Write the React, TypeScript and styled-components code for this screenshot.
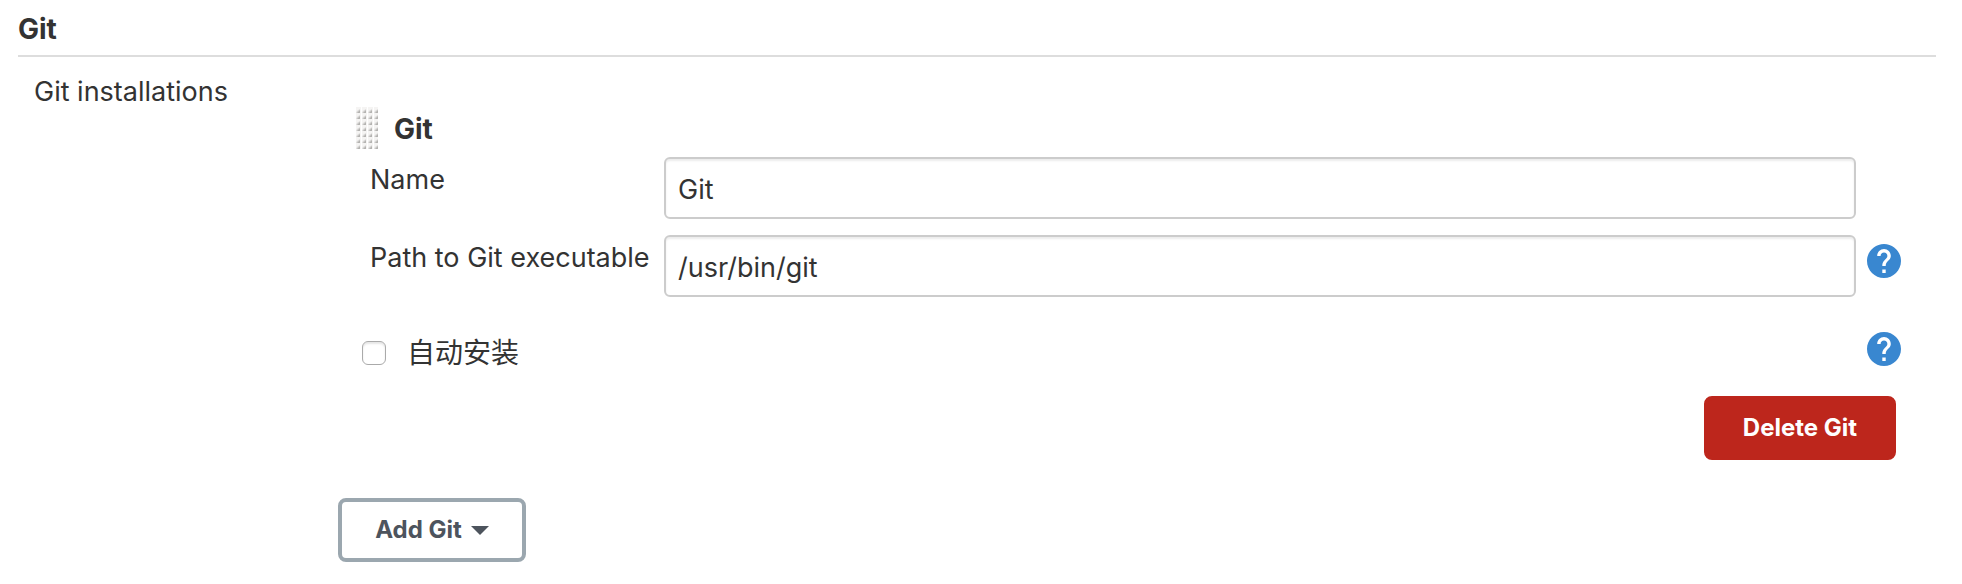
import React from "react";
import styled, { createGlobalStyle } from "styled-components";

const GlobalStyle = createGlobalStyle`
  *, *::before, *::after { box-sizing: border-box; }
  body {
    margin: 0;
    background: #fff;
    color: #333;
    font-family: Inter, "Noto Sans CJK SC", sans-serif;
    font-size: 27px;
    line-height: 36px;
  }
`;

const Page = styled.main`
  padding: 0 26px 20px 18px;
`;

const SectionTitle = styled.h2`
  margin: 0;
  padding: 11px 0 8px;
  border-bottom: 2px solid #ddd;
  font-size: 28px;
  font-weight: 700;
  line-height: 36px;
`;

const Setting = styled.section`
  display: grid;
  grid-template-columns: 320px 1fr;
`;

const SettingLabel = styled.div`
  padding: 17px 0 0 16px;
`;

const Installation = styled.div`
  display: flex;
  flex-direction: column;
  padding: 50px 0 0 18px;
`;

const InstallationHeader = styled.div`
  display: flex;
  align-items: center;
  gap: 16px;
  height: 42px;
  margin-bottom: 8px;
`;

const InstallationTitle = styled.h3`
  margin: 0;
  padding-top: 2px;
  font-size: 28px;
  font-weight: 700;
  line-height: 36px;
`;

const FieldRow = styled.div`
  display: grid;
  grid-template-columns: 294px 1fr 80px;
  align-items: start;
  padding-left: 14px;
  margin-bottom: 16px;
`;

const FieldLabel = styled.label`
  padding-top: 5px;
  white-space: nowrap;
`;

const TextInput = styled.input`
  width: 100%;
  height: 62px;
  padding: 2px 12px 0;
  border: 2px solid #ccc;
  border-radius: 6px;
  background: #fff;
  box-shadow: inset 0 2px 2px rgba(0, 0, 0, 0.075);
  color: #333;
  font: inherit;
`;

const HelpButton = styled.button`
  display: block;
  width: 34px;
  height: 34px;
  padding: 0;
  margin: 9px 0 0 11px;
  border: 0;
  background: none;
  cursor: pointer;

  svg { display: block; }
`;

const CheckRow = styled.div`
  display: grid;
  grid-template-columns: 1fr 80px;
  align-items: start;
  padding: 10px 0 0 6px;
`;

const CheckLabel = styled.label`
  display: flex;
  align-items: center;
  gap: 21px;
  padding-top: 12px;
  font-size: 28px;
`;

const Checkbox = styled.input`
  appearance: none;
  width: 24px;
  height: 24px;
  margin: 0;
  border: 1px solid #aaa;
  border-radius: 6px;
  background: #fff;
  box-shadow: inset 0 2px 2px rgba(0, 0, 0, 0.1);

  &:checked { background: #3987d0; }
`;

const Button = styled.button<{ $danger?: boolean }>`
  display: inline-flex;
  align-items: center;
  justify-content: center;
  gap: 9px;
  height: 64px;
  min-width: ${(p) => (p.$danger ? "192px" : "188px")};
  padding: 0 24px;
  border: 4px solid ${(p) => (p.$danger ? "#bd261c" : "#9ba7af")};
  border-radius: 8px;
  background: ${(p) => (p.$danger ? "#bd261c" : "#fff")};
  color: ${(p) => (p.$danger ? "#fff" : "#4d545d")};
  font: inherit;
  font-size: 24px;
  font-weight: 700;
  white-space: nowrap;
  cursor: pointer;
`;

const DeleteActions = styled.div`
  display: flex;
  justify-content: flex-end;
  padding: 25px 40px 0 0;
`;

const AddActions = styled.div`
  padding-top: 38px;
`;

function DragHandle() {
  return (
    <svg width="22" height="42" viewBox="0 0 22 42" aria-hidden="true">
      <defs>
        <pattern id="grip" width="6" height="6" patternUnits="userSpaceOnUse">
          <path d="M0 0h5v6H0z" fill="#f5f4f3" />
          <path d="M0 6L1 4L4 2V6z" fill="#dad9d8" />
          <path d="M1 6L4 3V6z" fill="#b4b3b1" />
        </pattern>
      </defs>
      <rect width="22" height="42" fill="url(#grip)" />
    </svg>
  );
}

function Help({ topic }: { topic: string }) {
  return (
    <HelpButton type="button" aria-label={`Help for ${topic}`}>
      <svg width="34" height="34" viewBox="2 2 20 20" aria-hidden="true">
        <path
          fill="#3987d0"
          d="M12 2C6.48 2 2 6.48 2 12s4.48 10 10 10 10-4.48 10-10S17.52 2 12 2zm1 17h-2v-2h2v2zm2.07-7.75l-.9.92C13.45 12.9 13 13.5 13 15h-2v-.5c0-1.1.45-2.1 1.17-2.83l1.24-1.26c.37-.36.59-.86.59-1.41 0-1.1-.9-2-2-2s-2 .9-2 2H8c0-2.21 1.79-4 4-4s4 1.79 4 4c0 .88-.36 1.68-.93 2.25z"
        />
      </svg>
    </HelpButton>
  );
}

export default function App() {
  return (
    <>
      <GlobalStyle />
      <Page>
        <SectionTitle>Git</SectionTitle>
        <Setting>
          <SettingLabel>Git installations</SettingLabel>
          <div>
            <Installation>
              <InstallationHeader>
                <DragHandle />
                <InstallationTitle>Git</InstallationTitle>
              </InstallationHeader>
              <FieldRow>
                <FieldLabel htmlFor="git-name">Name</FieldLabel>
                <TextInput id="git-name" type="text" defaultValue="Git" />
              </FieldRow>
              <FieldRow>
                <FieldLabel htmlFor="git-path">Path to Git executable</FieldLabel>
                <TextInput id="git-path" type="text" defaultValue="/usr/bin/git" />
                <Help topic="Path to Git executable" />
              </FieldRow>
              <CheckRow>
                <CheckLabel>
                  <Checkbox type="checkbox" />
                  <span lang="zh-CN">自动安装</span>
                </CheckLabel>
                <Help topic="自动安装" />
              </CheckRow>
              <DeleteActions>
                <Button type="button" $danger>Delete Git</Button>
              </DeleteActions>
            </Installation>
            <AddActions>
              <Button type="button" aria-haspopup="menu">
                Add Git
                <svg width="18" height="9" viewBox="0 0 18 9" aria-hidden="true">
                  <path d="M0 0h18L9 9z" fill="#4d545d" />
                </svg>
              </Button>
            </AddActions>
          </div>
        </Setting>
      </Page>
    </>
  );
}
